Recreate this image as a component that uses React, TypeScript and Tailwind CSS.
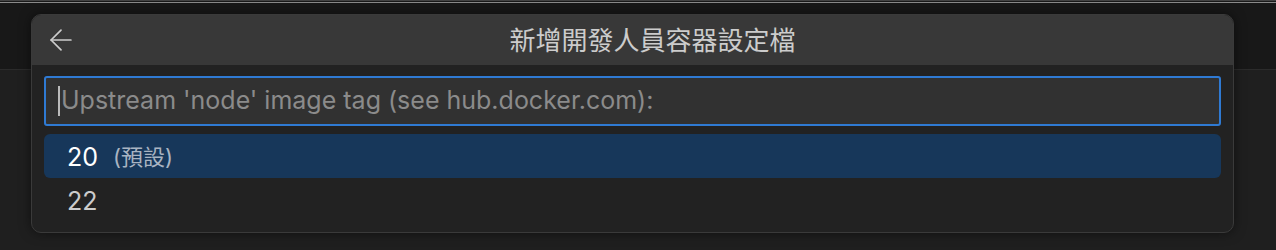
import { ArrowLeft } from "lucide-react";

const font = 'Inter, "Noto Sans CJK TC", sans-serif';

export default function App() {
    return (
        <div className="w-[1276px] h-[250px] overflow-hidden bg-[#1f1f1f] flex flex-col" style={{ fontFamily: font }}>
            {/* window chrome behind the picker */}
            <div className="h-[3px] bg-[#1a1a1a] border-t border-[#444] border-b border-b-[#8a8a8a]" />
            <div className="h-[67px] bg-[#181818] border-b border-[#2b2b2b] flex-shrink-0" />

            {/* quick pick */}
            <div className="relative">
                <div className="absolute left-[31px] top-[-56px] w-[1203px] rounded-[10px] border border-[#3a3a3a] bg-[#222222] overflow-hidden shadow-[0_0_12px_rgba(0,0,0,0.5)]">
                    <div className="h-[50px] bg-[#383838] flex items-center relative">
                        <ArrowLeft className="ml-[12px] text-[#cccccc] relative z-10" size={34} strokeWidth={1.2} />
                        <div className="absolute inset-0 flex items-center justify-center pl-[40px] text-[26px] text-[#cccccc]">
                            新增開發人員容器設定檔
                        </div>
                    </div>
                    <div className="px-[12px] pt-[11px] pb-[10px]">
                        <div className="h-[50px] border-2 border-[#2f7ad3] rounded-[3px] bg-[#313131] flex items-center pl-[12px]">
                            <span className="w-[2px] h-[30px] bg-[#bbbbbb] mr-[1px]" />
                            <span className="text-[25px] text-[#8b8b8b]">Upstream 'node' image tag (see hub.docker.com):</span>
                        </div>
                        <div className="mt-[8px]">
                            <div className="h-[44px] rounded-[6px] bg-[#17375a] flex items-center pl-[23px] pt-[3px] gap-[15px]">
                                <span className="text-[25px] text-white">20</span>
                                <span className="text-[22px] text-[#a9b4c2]">(預設)</span>
                            </div>
                            <div className="h-[44px] flex items-center pl-[23px] pt-[3px]">
                                <span className="text-[25px] text-[#cccccc]">22</span>
                            </div>
                        </div>
                    </div>
                </div>
            </div>
        </div>
    );
}
